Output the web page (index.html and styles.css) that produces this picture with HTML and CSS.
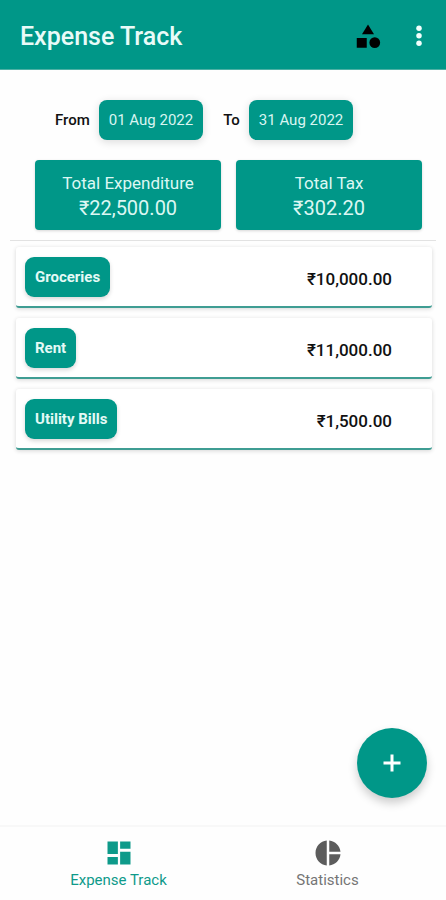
FILE: index.html
```html
<!DOCTYPE html>
<html lang="en">
<head>
<meta charset="utf-8">
<meta name="viewport" content="width=device-width, initial-scale=1">
<title>Expense Track</title>
<link rel="stylesheet" href="styles.css">
</head>
<body>
<header class="app-bar">
  <h1 class="app-title">Expense Track</h1>
  <button class="icon-button" type="button" aria-label="Categories">
    <svg class="icon" viewBox="0 0 24 24"><path d="M12 2.800 7.200 10.600h9.600z"/><circle cx="17.400" cy="17.300" r="4.300"/><path d="M3 13.600h8v7.800H3z"/></svg>
  </button>
  <button class="icon-button icon-button-light" type="button" aria-label="More options">
    <svg class="icon" viewBox="0 0 24 24"><circle cx="12" cy="5.800" r="2.200"/><circle cx="12" cy="11.800" r="2.200"/><circle cx="12" cy="17.800" r="2.200"/></svg>
  </button>
</header>
<main class="content">
  <div class="date-range">
    <span class="date-label" id="from">From</span>
    <button class="date-button" type="button" aria-describedby="from">01 Aug 2022</button>
    <span class="date-label date-label-to" id="to">To</span>
    <button class="date-button" type="button" aria-describedby="to">31 Aug 2022</button>
  </div>
  <section class="totals">
    <div class="total-card">
      <span class="total-name">Total Expenditure</span>
      <span class="total-value">₹22,500.00</span>
    </div>
    <div class="total-card">
      <span class="total-name">Total Tax</span>
      <span class="total-value">₹302.20</span>
    </div>
  </section>
  <ul class="expenses">
    <li class="expense"><button class="category" type="button">Groceries</button><span class="amount">₹10,000.00</span></li>
    <li class="expense"><button class="category" type="button">Rent</button><span class="amount">₹11,000.00</span></li>
    <li class="expense"><button class="category" type="button">Utility Bills</button><span class="amount">₹1,500.00</span></li>
  </ul>
</main>
<button class="fab" type="button" aria-label="Add expense">
  <svg class="icon" viewBox="0 0 30 30"><path d="M13.500 6.500h3v7h7v3h-7v7h-3v-7h-7v-3h7z"/></svg>
</button>
<nav class="bottom-nav">
  <a class="nav-item nav-item-active" href="#track">
    <svg class="icon" viewBox="0 0 24 24"><path d="M2.800 2.800h8.300v9.900H2.800zM12.900 2.800h8.300v5.700h-8.300zM2.800 15.100h8.300v6.100H2.800zM12.900 10.900h8.300v10.300h-8.300z"/></svg>
    <span>Expense Track</span>
  </a>
  <a class="nav-item" href="#statistics">
    <svg class="icon" viewBox="0 0 24 24"><path d="M11 2v20c-5.100-.5-9-4.800-9-10s3.900-9.500 9-10zM13 2v9h9c-.5-4.700-4.200-8.500-9-9zM13 13v9c4.700-.5 8.500-4.200 9-9z"/></svg>
    <span>Statistics</span>
  </a>
</nav>
</body>
</html>
```
FILE: styles.css
```css
* {
  box-sizing: border-box;
}

body {
  margin: 0;
  min-height: 100vh;
  display: flex;
  flex-direction: column;
  background: #fefefe;
  color: #111;
  font-family: Roboto, "Noto Sans", sans-serif;
  font-size: 15px;
}

button {
  border: 0;
  padding: 0;
  font: inherit;
  color: inherit;
  background: none;
}

.icon {
  display: block;
  width: 30px;
  height: 30px;
  fill: currentColor;
}

.app-bar {
  display: flex;
  align-items: center;
  height: 70px;
  padding: 2px 12px 0 20px;
  background: #009788;
  border-bottom: 1px solid #4db0a4;
}

.app-title {
  flex: 1;
  margin: 0;
  padding-top: 2px;
  font-size: 25px;
  line-height: 32px;
  font-weight: 500;
  color: #e9fbf8;
}

.icon-button {
  color: #000;
}

.icon-button-light {
  margin-left: 21px;
  color: #f2fffd;
}

.content {
  flex: 1;
}

.date-range {
  display: flex;
  align-items: center;
  padding: 30px 24px 20px 55px;
}

.date-label {
  font-weight: 500;
  margin-right: 9px;
}

.date-label-to {
  margin-left: 20px;
}

.date-button {
  height: 40px;
  padding: 0 10px;
  border-radius: 8px;
  background: #009788;
  color: #d9f5f1;
  box-shadow: 0 2px 8px rgba(0, 0, 0, 0.14);
}

.totals {
  display: grid;
  grid-template-columns: 1fr 1fr;
  gap: 15px;
  padding: 0 24px 10px 35px;
}

.total-card {
  display: flex;
  flex-direction: column;
  align-items: center;
  padding: 10px 0 9px;
  border-radius: 4px;
  background: #009788;
  color: #dcf7f3;
  line-height: 26px;
  box-shadow: 0 1px 3px rgba(0, 0, 0, 0.16);
}

.total-name {
  font-size: 17px;
}

.total-value {
  font-size: 20px;
  line-height: 25px;
}

.expenses {
  display: grid;
  gap: 10px;
  margin: 0 10px;
  padding: 6px 4px 0 6px;
  border-top: 1px solid #e2e2e2;
  list-style: none;
}

.expense {
  display: flex;
  align-items: center;
  justify-content: space-between;
  height: 61px;
  padding: 0 40px 0 9px;
  border-bottom: 2px solid #3f9d93;
  border-radius: 3px;
  background: #fff;
  box-shadow: 0 1px 4px rgba(0, 0, 0, 0.16);
}

.category {
  height: 40px;
  padding: 0 10px;
  border-radius: 9px;
  background: #009788;
  color: #e4faf6;
  font-weight: 700;
  box-shadow: 0 2px 4px rgba(0, 0, 0, 0.16);
}

.amount {
  font-size: 17px;
  font-weight: 500;
  padding-top: 4px;
}

.fab {
  position: fixed;
  right: 19px;
  bottom: 102px;
  display: grid;
  place-items: center;
  width: 70px;
  height: 70px;
  border-radius: 50%;
  background: #009788;
  color: #fff;
  box-shadow: 0 5px 10px rgba(0, 0, 0, 0.2);
}

.bottom-nav {
  display: grid;
  grid-template-columns: 1fr 1fr;
  height: 75px;
  padding: 11px 14px 0;
  border-top: 2px solid #f8f8f8;
}

.nav-item {
  display: flex;
  flex-direction: column;
  align-items: center;
  gap: 2px;
  color: #757575;
  line-height: 20px;
  text-decoration: none;
}

.nav-item .icon {
  color: #5c5c5c;
}

.nav-item-active,
.nav-item-active .icon {
  color: #0e9a8a;
}
```
